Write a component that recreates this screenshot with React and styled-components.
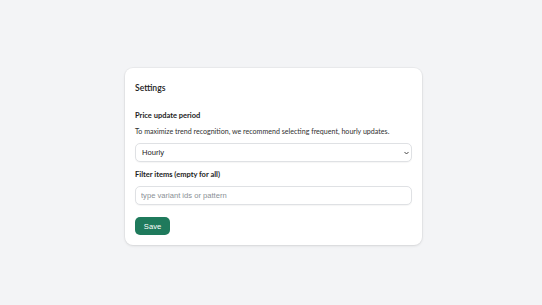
import React from "react";
import styled, { createGlobalStyle } from "styled-components";

const Global = createGlobalStyle`
  html, body { margin: 0; padding: 0; background: #f3f4f6; }
  body { font-family: Lato, "Noto Sans", sans-serif; color: #1f2328; }
`;

const Page = styled.div`
  min-height: 305px;
  box-sizing: border-box;
  padding: 68px 0 0 125px;
`;

const Card = styled.section`
  width: 297px;
  box-sizing: border-box;
  background: #ffffff;
  border-radius: 8px;
  box-shadow: 0 1px 3px rgba(0, 0, 0, 0.1), 0 0 0 1px rgba(0, 0, 0, 0.03);
  padding: 12px 10px 10px 10px;
  display: flex;
  flex-direction: column;
`;

const Title = styled.h2`
  margin: 0 0 14px;
  font-size: 8.6px;
  font-weight: 600;
  line-height: 16px;
  color: #222;
`;

const Label = styled.label`
  display: block;
  font-size: 7.5px;
  font-weight: 700;
  line-height: 12px;
  margin-bottom: ${(p) => p.$mb || 4}px;
  color: #1c1c1c;
`;

const Help = styled.p`
  margin: 0 0 5px;
  font-size: 7.1px;
  line-height: 12px;
  color: #303030;
  white-space: nowrap;
`;

const SelectWrap = styled.div`
  position: relative;
  margin-bottom: 7px;
`;

const Select = styled.select`
  appearance: none;
  display: block;
  width: 100%;
  height: 19px;
  box-sizing: border-box;
  border: 1px solid #dfe1e4;
  border-radius: 5px;
  background: #fff;
  box-shadow: 0 1px 1px rgba(0, 0, 0, 0.04);
  font-family: "Liberation Sans", Arial, sans-serif;
  font-size: 7.6px;
  padding: 0 6px;
  color: #222;
`;

const Chevron = styled.svg`
  position: absolute;
  display: block;
  right: 3px;
  top: 8px;
  width: 5px;
  height: 4px;
  pointer-events: none;
`;

const Input = styled.input`
  width: 100%;
  height: 19px;
  box-sizing: border-box;
  border: 1px solid #dfe1e4;
  border-radius: 5px;
  background: #fff;
  box-shadow: 0 1px 1px rgba(0, 0, 0, 0.04);
  font-family: "Liberation Sans", Arial, sans-serif;
  font-size: 7.6px;
  padding: 0 5px;
  margin-bottom: 12px;
  &::placeholder { color: #8a8f95; }
`;

const Button = styled.button`
  align-self: flex-start;
  width: 35px;
  height: 18px;
  border: none;
  border-radius: 5px;
  background: #1f7a5c;
  color: #fff;
  font-family: "Liberation Sans", Arial, sans-serif;
  font-size: 7.6px;
  padding: 0;
`;

export default function App() {
  return (
    <>
      <Global />
      <Page>
        <Card>
          <Title>Settings</Title>
          <Label $mb={4}>Price update period</Label>
          <Help>To maximize trend recognition, we recommend selecting frequent, hourly updates.</Help>
          <SelectWrap>
            <Select defaultValue="hourly">
              <option value="hourly">Hourly</option>
              <option value="daily">Daily</option>
            </Select>
            <Chevron viewBox="0 0 10 8">
              <path d="M1.5 2.5 L5 6 L8.5 2.5" fill="none" stroke="#333" strokeWidth="1.8" strokeLinecap="round" strokeLinejoin="round" />
            </Chevron>
          </SelectWrap>
          <Label $mb={5}>Filter items (empty for all)</Label>
          <Input placeholder="type variant ids or pattern" />
          <Button>Save</Button>
        </Card>
      </Page>
    </>
  );
}
